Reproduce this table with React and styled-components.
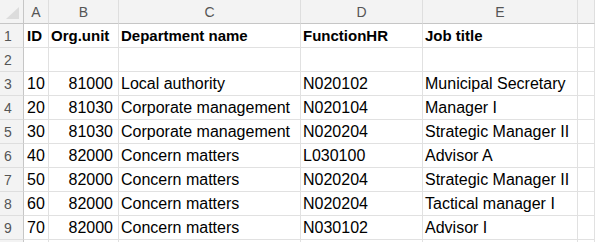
import React from "react";
import styled, { createGlobalStyle } from "styled-components";

const Global = createGlobalStyle`
  html, body { margin: 0; padding: 0; background: #ffffff; overflow: hidden; }
  #root { width: 595px; height: 242px; overflow: hidden; }
`;

const Sheet = styled.div`
  display: grid;
  grid-template-columns: 24px 25px 70px 182px 122px 155px 1fr;
  grid-auto-rows: 24px;
  width: 595px;
  font-family: "Liberation Sans", Arial, sans-serif;
  color: #000;
`;

const Corner = styled.div`
  position: relative;
  background: #f3f3f3;
  border-right: 1px solid #c6c6c6;
  border-bottom: 1px solid #c6c6c6;
  box-sizing: border-box;
`;

const CornerTriangle = styled.div`
  position: absolute;
  right: 4px;
  bottom: 4px;
  width: 0;
  height: 0;
  border-left: 13px solid transparent;
  border-bottom: 12px solid #dcdcdc;
`;

const ColHead = styled.div`
  display: flex;
  align-items: center;
  justify-content: center;
  box-sizing: border-box;
  background: #f3f3f3;
  border-right: 1px solid #dedede;
  border-bottom: 1px solid #c6c6c6;
  color: #555;
  font-size: 14px;
`;

const RowHead = styled.div`
  display: flex;
  align-items: center;
  padding-left: 4px;
  box-sizing: border-box;
  background: #f3f3f3;
  border-right: 1px solid #c6c6c6;
  border-bottom: 1px solid #dedede;
  color: #555;
  font-size: 14px;
`;

const Cell = styled.div`
  display: flex;
  align-items: center;
  justify-content: ${(p) => (p.$right ? "flex-end" : "flex-start")};
  padding: ${(p) => (p.$right ? "0 5px 0 2px" : `0 2px 0 ${p.$pad ?? 2}px`)};
  box-sizing: border-box;
  border-right: 1px solid #e1e1e1;
  border-bottom: 1px solid #e1e1e1;
  font-size: ${(p) => (p.$bold ? 15 : 16)}px;
  font-weight: ${(p) => (p.$bold ? 700 : 400)};
  white-space: nowrap;
  overflow: visible;
  color: #000;
  line-height: 23px;
`;

const columns = ["A", "B", "C", "D", "E", ""];

const rows = [
  ["ID", "Org.unit", "Department name", "FunctionHR", "Job title"],
  ["", "", "", "", ""],
  ["10", "81000", "Local authority", "N020102", "Municipal Secretary"],
  ["20", "81030", "Corporate management", "N020104", "Manager I"],
  ["30", "81030", "Corporate management", "N020204", "Strategic Manager II"],
  ["40", "82000", "Concern matters", "L030100", "Advisor A"],
  ["50", "82000", "Concern matters", "N020204", "Strategic Manager II"],
  ["60", "82000", "Concern matters", "N020204", "Tactical manager I"],
  ["70", "82000", "Concern matters", "N030102", "Advisor I"],
];

export default function App() {
  return (
    <>
      <Global />
      <Sheet>
        <Corner>
          <CornerTriangle />
        </Corner>
        {columns.map((c, i) => (
          <ColHead key={i}>{c}</ColHead>
        ))}
        {rows.map((r, ri) => (
          <React.Fragment key={ri}>
            <RowHead>{ri + 1}</RowHead>
            {r.map((v, ci) => (
              <Cell
                key={ci}
                $bold={ri === 0}
                $right={ri > 0 && ci === 1}
                $pad={ci === 0 ? 3 : 2}
              >
                {v}
              </Cell>
            ))}
            <Cell />
          </React.Fragment>
        ))}
        <RowHead />
        {columns.map((c, i) => (
          <Cell key={`tail-${i}`} />
        ))}
      </Sheet>
    </>
  );
}
